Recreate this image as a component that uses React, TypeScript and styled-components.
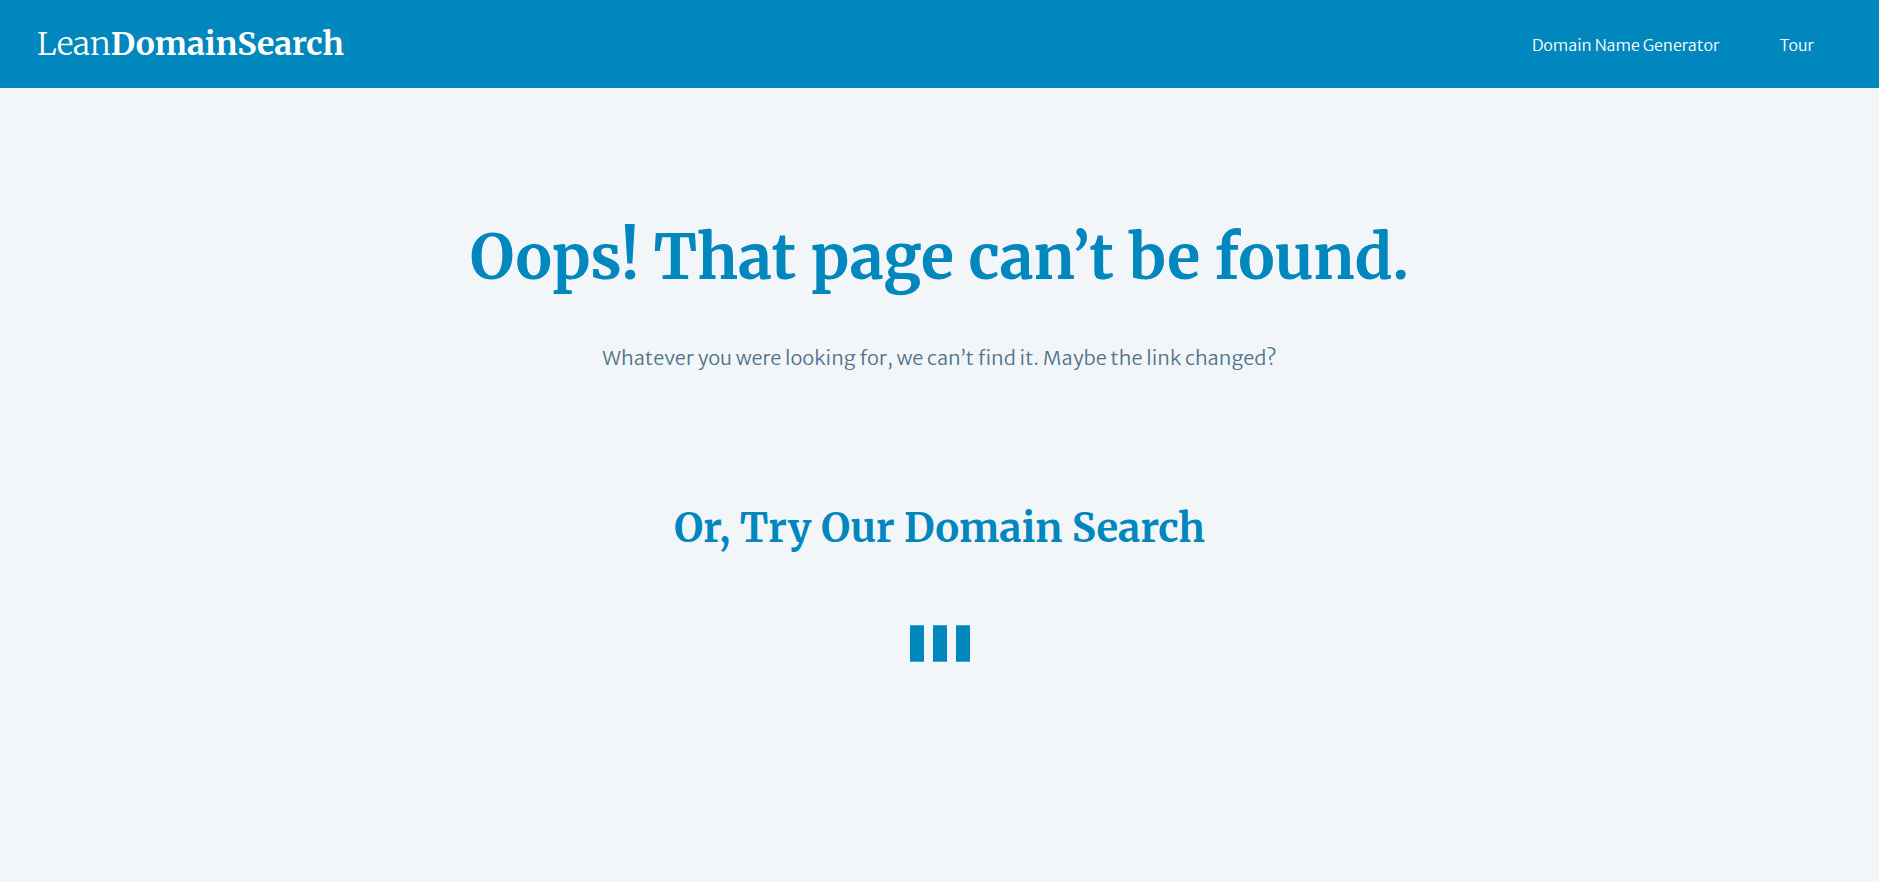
import React from 'react';
import styled, { createGlobalStyle } from 'styled-components';

const serif = "Merriweather, 'Noto Serif', 'DejaVu Serif', 'Liberation Serif', serif";
const sans = "'Merriweather Sans', 'Open Sans', 'Liberation Sans', sans-serif";

const GlobalStyle = createGlobalStyle`
  body { margin: 0; background: #f3f6f8; font-family: ${sans}; }
`;

const Header = styled.header`
  display: flex;
  align-items: center;
  justify-content: space-between;
  box-sizing: border-box;
  min-height: 88px;
  padding: 0 65px 0 37px;
  background: #0087be;
`;

const Logo = styled.a`
  color: #fff;
  font: 300 32px/48px ${serif};
  text-decoration: none;
`;

const LogoStrong = styled.strong`
  font-weight: 700;
`;

const Nav = styled.nav`
  display: flex;
  gap: 60px;
  padding-top: 2px;
`;

const NavLink = styled.a`
  color: #fff;
  font-size: 16px;
  font-weight: 350;
  line-height: 24px;
  text-decoration: none;
`;

const Main = styled.main`
  display: flex;
  flex-direction: column;
  align-items: center;
  padding: 125px 24px;
  text-align: center;
`;

const Title = styled.h1`
  margin: 0;
  color: #0087be;
  font: 700 61px/90px ${serif};
`;

const Lead = styled.p`
  margin: 39px 0 0;
  color: #4f748e;
  font-size: 20px;
  font-weight: 300;
  line-height: 32px;
`;

const Subtitle = styled.h2`
  margin: 124px 0 0;
  color: #0087be;
  font: 700 40px/60px ${serif};
`;

const Loader = styled.div`
  display: flex;
  gap: 9px;
  margin-top: 67px;
`;

const Bar = styled.span`
  box-sizing: border-box;
  width: 14px;
  height: 37px;
  border: solid #42a5ce;
  border-width: 1px 0;
  background: #0087be;
`;

export default function App() {
  return (
    <>
      <GlobalStyle />
      <Header>
        <Logo href="#">Lean<LogoStrong>DomainSearch</LogoStrong></Logo>
        <Nav>
          <NavLink href="#generator">Domain Name Generator</NavLink>
          <NavLink href="#tour">Tour</NavLink>
        </Nav>
      </Header>
      <Main>
        <Title>Oops! That page can’t be found.</Title>
        <Lead>Whatever you were looking for, we can’t find it. Maybe the link changed?</Lead>
        <Subtitle>Or, Try Our Domain Search</Subtitle>
        <Loader role="status" aria-label="Loading">
          <Bar />
          <Bar />
          <Bar />
        </Loader>
      </Main>
    </>
  );
}
